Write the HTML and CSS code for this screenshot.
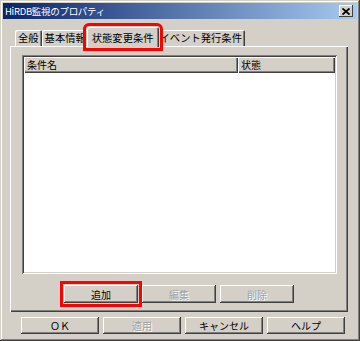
FILE: index.html
```html
<!DOCTYPE html>
<html lang="ja">
<head>
  <meta charset="UTF-8">
  <title>HiRDB監視のプロパティ</title>
  <link rel="stylesheet" href="styles.css">
</head>
<body>

  <div class="window">
    <div class="titlebar">
      <span class="title">HiRDB監視のプロパティ</span>
      <span class="close">
        <svg width="8" height="7" viewBox="0 0 8 7">
          <path d="M0.5 0.5 L7.5 6.5 M7.5 0.5 L0.5 6.5" stroke="#000" stroke-width="1.8" fill="none"/>
        </svg>
      </span>
    </div>

    <div class="tabs">
      <div class="tab">全般</div>
      <div class="tab">基本情報</div>
      <div class="tab active marked">状態変更条件</div>
      <div class="tab">イベント発行条件</div>
    </div>

    <div class="panel">
      <div class="list">
        <div class="list-head">
          <div class="col">条件名</div>
          <div class="col">状態</div>
        </div>
        <div class="list-body"></div>
      </div>

      <div class="actions">
        <button class="btn marked">追加</button>
        <button class="btn" disabled>編集</button>
        <button class="btn" disabled>削除</button>
      </div>
    </div>

    <div class="footer">
      <button class="btn wide">ＯＫ</button>
      <button class="btn wide" disabled>適用</button>
      <button class="btn wide">キャンセル</button>
      <button class="btn wide">ヘルプ</button>
    </div>
  </div>

</body>
</html>
```

FILE: styles.css
```css
body {
  margin: 0;
  font-family: "Noto Sans CJK JP", "DejaVu Sans", sans-serif;
  font-size: 10px;
  color: #000;
}

/* ウィンドウ枠 */
.window {
  width: 360px;
  height: 341px;
  box-sizing: border-box;
  padding: 3px;
  background-color: #d4d0c8;
  box-shadow: inset -1px -1px #404040, inset 1px 1px #d4d0c8,
              inset -2px -2px #808080, inset 2px 2px #ffffff;
  display: flex;
  flex-direction: column;
}

.titlebar {
  height: 16px;
  display: flex;
  align-items: center;
  justify-content: space-between;
  padding: 0 4px 0 2px;
  background: linear-gradient(to right, #0a246a, #a6caf0);
  color: white;
}

.title {
  font-size: 9.5px;
  letter-spacing: -0.3px;
}

.close {
  width: 14px;
  height: 12px;
  background-color: #d4d0c8;
  box-shadow: inset -1px -1px #404040, inset 1px 1px #ffffff;
  display: flex;
  align-items: center;
  justify-content: center;
}

/* タブ */
.tabs {
  display: flex;
  height: 19px;
  margin-top: 8px;
  padding-left: 12px;
  align-items: flex-end;
}

.tab {
  height: 16px;
  line-height: 16px;
  padding: 0 3px;
  font-size: 10.3px;
  white-space: nowrap;
  overflow: hidden;
  border-radius: 2px 2px 0 0;
  box-shadow: inset 1px 1px #ffffff, inset -1px 0 #404040, inset -2px 0 #808080;
}

.tab.active {
  position: relative;
  z-index: 1;
  height: 17px;
  margin: 0 -2px -1px;
  padding: 3px 5px 0;
  background-color: #d4d0c8;
}

.marked {
  outline: 3px solid #ff0000;
  outline-offset: 1px;
}

.panel {
  width: 338px;
  height: 266px;
  box-sizing: border-box;
  margin-left: 7px;
  padding: 9px 11px 0 12px;
  box-shadow: inset 1px 1px #ffffff, inset -1px -1px #404040, inset -2px -2px #808080;
}

/* 一覧 */
.list {
  height: 219px;
  box-sizing: border-box;
  padding: 2px;
  background-color: white;
  box-shadow: inset 1px 1px #808080, inset -1px -1px #ffffff,
              inset 2px 2px #404040, inset -2px -2px #d4d0c8;
  display: flex;
  flex-direction: column;
}

.list-head {
  display: grid;
  grid-template-columns: 214px 1fr;
  height: 16px;
  background-color: #d4d0c8;
}

.list-head .col {
  padding-left: 3px;
  line-height: 16px;
  box-shadow: inset 1px 1px #ffffff, inset -1px -1px #404040, inset -2px -2px #808080;
}

.list-body {
  flex: 1;
}

.actions {
  display: flex;
  gap: 4px;
  margin-top: 11px;
  padding-left: 42px;
}

/* ボタン */
.btn {
  width: 74px;
  height: 18px;
  padding: 0;
  border: none;
  font-family: inherit;
  font-size: 10px;
  color: #000;
  background-color: #d4d0c8;
  box-shadow: inset -1px -1px #404040, inset 1px 1px #ffffff, inset -2px -2px #808080;
}

.btn:disabled {
  color: #a0a0a0;
  text-shadow: 1px 1px #ffffff;
}

.footer {
  display: flex;
  gap: 4px;
  margin-top: 5px;
  padding-left: 18px;
}

.btn.wide {
  width: 78px;
  height: 17px;
}
```
